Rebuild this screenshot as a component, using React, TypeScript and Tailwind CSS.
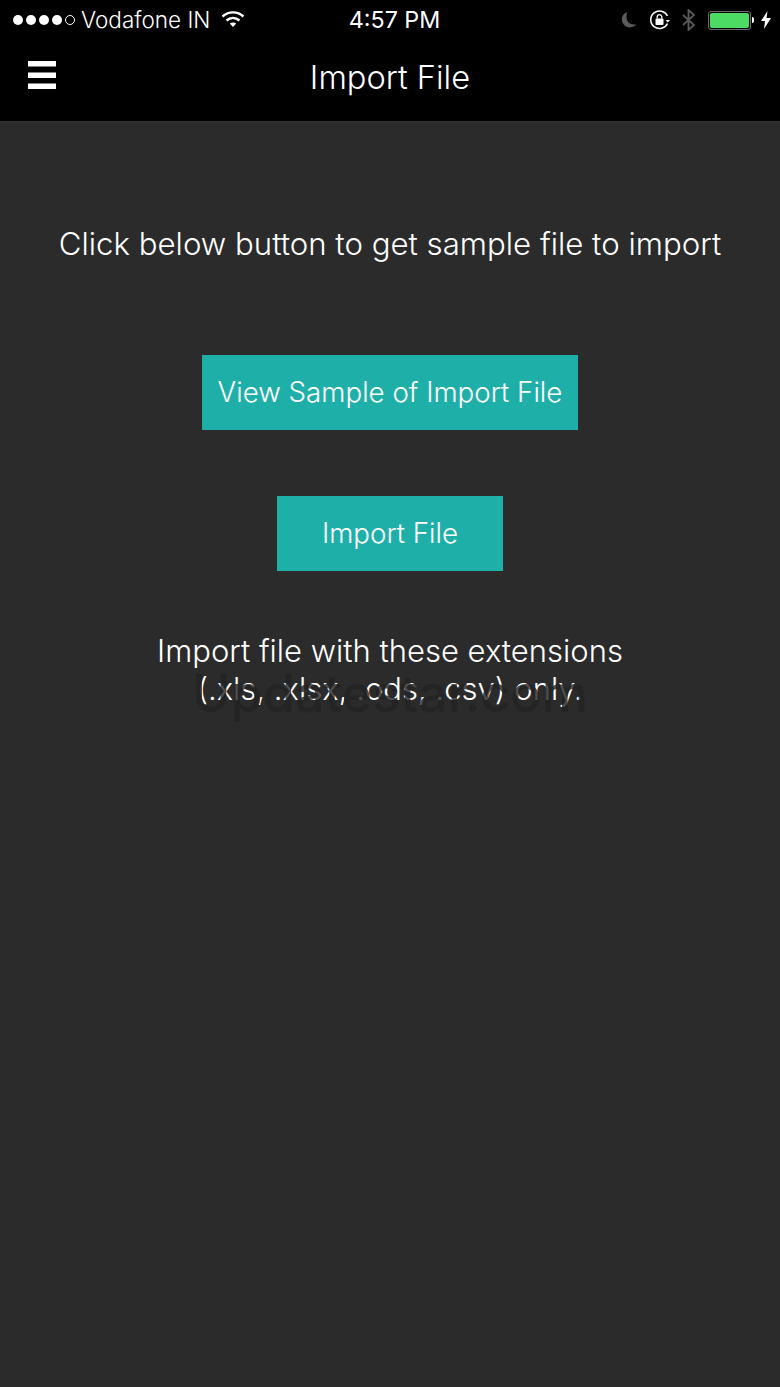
const font = { fontFamily: 'Inter, "Noto Sans", sans-serif' }

function StatusBar() {
  return (
    <div className="flex h-10 items-center justify-between pl-[13px] pr-[9px] text-white">
      <div className="flex w-[260px] items-center">
        <div className="flex items-center gap-[3px]">
          {[0, 1, 2, 3].map(i => (
            <span key={i} className="h-[10px] w-[10px] rounded-full bg-white" />
          ))}
          <span className="h-[10px] w-[10px] rounded-full border border-white" />
        </div>
        <span className="ml-[6px] text-[22.5px] font-light leading-none">Vodafone IN</span>
        <svg width="24" height="18" viewBox="0 0 24 18" className="ml-[11px] -mt-[3px]" fill="none" stroke="#fff" strokeWidth="2.4">
          <path d="M1.5 6.5C7.5 1 16.5 1 22.5 6.5" />
          <path d="M5.5 10.5C9.5 7 14.5 7 18.5 10.5" />
          <path d="M12 17l-3.2-3.4c1.8-1.5 4.6-1.5 6.4 0z" fill="#fff" stroke="none" />
        </svg>
      </div>
      <span className="ml-[5px] text-[23.3px] font-normal leading-none">4:57 PM</span>
      <div className="flex w-[260px] items-center justify-end">
        <svg width="19" height="19" viewBox="0 0 18 18" fill="#5a5a5a">
          <path d="M7 1C3 2.5 1 6 2 10c1 4 5.500 6.500 9.500 5.200 1.700-.5 3-1.500 4-2.700-4 1-7.500-.5-8.800-4C6 5.800 6 3.500 7 1z" />
        </svg>
        <svg width="22" height="22" viewBox="0 0 22 22" fill="none" className="ml-[10px]">
          <path d="M18.500 14.500A8.800 8.800 0 1 1 18.500 7" stroke="#fff" strokeWidth="1.500" />
          <path d="M16.500 11h4.500l-2.200 2.500z" fill="#fff" />
          <rect x="6.500" y="9.500" width="8" height="6.500" rx="1" fill="#fff" />
          <path d="M8.200 9.500V8a2.300 2.300 0 0 1 4.600 0v1.500" stroke="#fff" strokeWidth="1.300" />
        </svg>
        <svg width="14" height="22" viewBox="0 0 14 22" fill="none" stroke="#5a5a5a" strokeWidth="1.800" className="ml-[11px]">
          <path d="M1 6l11 10-5.500 5V1L12 6 1 16" />
        </svg>
        <div className="ml-[12px] flex items-center">
          <div className="h-[19px] w-[43px] rounded-[3px] border border-[#6a6a6a] p-px">
            <div className="h-full w-full rounded-[2px] bg-[#4cd964]" />
          </div>
          <span className="ml-px h-[6px] w-[2px] rounded-r-sm bg-white" />
        </div>
        <svg width="10" height="18" viewBox="0 0 10 18" fill="#fff" className="ml-[7px]">
          <path d="M6.500 0L0 10h4l-1 8 7-11H5.500z" />
        </svg>
      </div>
    </div>
  )
}

function ActionButton({ label, width }: { label: string; width: string }) {
  return (
    <button className={`h-[75px] ${width} bg-[#1fafa9] pt-px text-[27.7px] font-light text-white`}>
      {label}
    </button>
  )
}

export default function App() {
  return (
    <div style={font} className="flex h-[1387px] w-[780px] flex-col overflow-hidden bg-[#2b2b2b]">
      <header className="h-[122px] shrink-0 border-b border-[#333] bg-black">
        <StatusBar />
        <div className="relative flex h-[74px] items-center justify-center">
          <svg width="28" height="28" viewBox="0 0 28 28" fill="#fff" className="absolute left-[28px] top-[21px]">
            <rect y="0" width="28" height="5.500" />
            <rect y="11.500" width="28" height="5.500" />
            <rect y="22.500" width="28" height="5.500" />
          </svg>
          <h1 className="text-[32.6px] font-light text-white">Import File</h1>
        </div>
      </header>

      <main className="flex flex-col items-center pt-[102px] text-white">
        <p className="text-[31.2px] font-light leading-[40px]">Click below button to get sample file to import</p>
        <div className="mt-[91px]">
          <ActionButton label="View Sample of Import File" width="w-[376px]" />
        </div>
        <div className="mt-[66px]">
          <ActionButton label="Import File" width="w-[226px]" />
        </div>
        <div className="relative mt-[61px] text-center text-[31px] font-light leading-[38px]">
          <p>Import file with these extensions</p>
          <p>(.xls, .xlsx, .ods, .csv) only.</p>
          <span className="absolute left-1/2 top-[32px] -translate-x-1/2 whitespace-nowrap text-[52px] font-medium leading-[60px] text-[#232323]/80">
            Updatestar.com
          </span>
        </div>
      </main>
    </div>
  )
}
